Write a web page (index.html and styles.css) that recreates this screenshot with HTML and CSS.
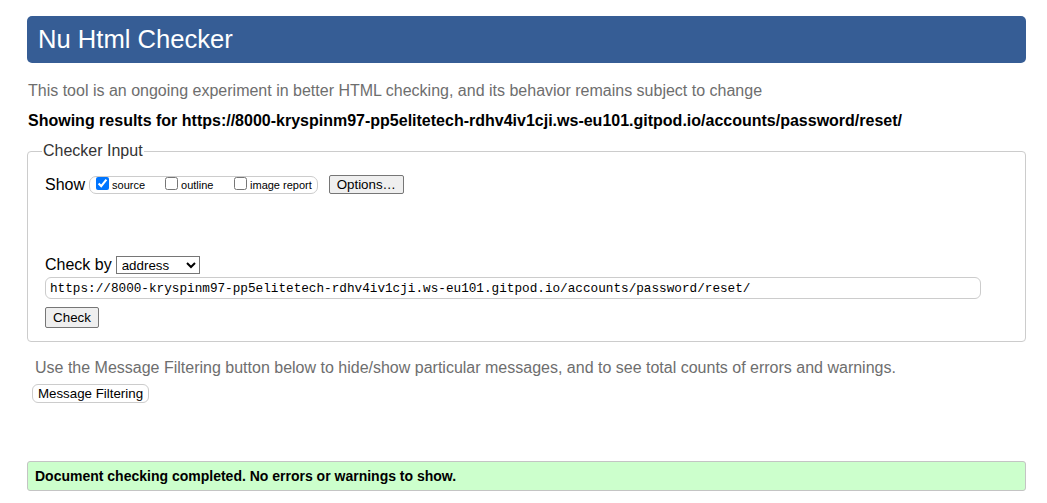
FILE: index.html
```html
<!DOCTYPE html>
<html lang="en">
<head>
<meta charset="utf-8">
<title>Nu Html Checker</title>
<link rel="stylesheet" href="styles.css">
</head>
<body>
<div class="page">
  <h1 class="banner">Nu Html Checker</h1>
  <p class="intro">This tool is an ongoing experiment in better HTML checking, and its behavior remains subject to change</p>
  <p class="results">Showing results for https://8000-kryspinm97-pp5elitetech-rdhv4iv1cji.ws-eu101.gitpod.io/accounts/password/reset/</p>
  <fieldset class="checker">
    <legend class="legend">Checker Input</legend>
    <div class="show-row">
      <span class="show-label">Show</span>
      <span class="show-group">
        <label class="opt opt-source"><input type="checkbox" class="cb" checked>source</label>
        <label class="opt opt-outline"><input type="checkbox" class="cb">outline</label>
        <label class="opt opt-image"><input type="checkbox" class="cb">image report</label>
      </span>
      <button class="btn btn-options" type="button">Options…</button>
    </div>
    <div class="checkby-row">
      <span class="checkby-label">Check by</span>
      <select class="select">
        <option>address</option>
      </select>
    </div>
    <input class="url" type="text" value="https://8000-kryspinm97-pp5elitetech-rdhv4iv1cji.ws-eu101.gitpod.io/accounts/password/reset/">
    <div class="check-row"><button class="btn btn-check" type="button">Check</button></div>
  </fieldset>
  <p class="filter-note">Use the Message Filtering button below to hide/show particular messages, and to see total counts of errors and warnings.</p>
  <div class="filter-row"><button class="btn-filter" type="button">Message Filtering</button></div>
  <div class="success">Document checking completed. No errors or warnings to show.</div>
</div>
</body>
</html>
```
FILE: styles.css
```css
html, body {
  margin: 0;
  padding: 0;
  background: #fff;
}
body {
  font-family: "Liberation Sans", Arial, sans-serif;
  color: #000;
}
.page {
  padding: 16px 21px 0 27px;
}
.banner {
  margin: 0;
  height: 47px;
  line-height: 47px;
  padding: 0 11px;
  background: #365d95;
  color: #fff;
  font-size: 25.6px;
  font-weight: normal;
  border-radius: 5px;
}
.intro {
  margin: 19px 0 0 1px;
  font-size: 16px;
  line-height: 18px;
  color: #6e6e6e;
}
.results {
  margin: 12px 0 0 1px;
  font-size: 16px;
  line-height: 18px;
  font-weight: bold;
}
.checker {
  margin: 12px 0 0 0;
  border: 1px solid #cccccc;
  border-radius: 4px;
  padding: 0 17px 13px 17px;
  min-inline-size: 0;
}
.legend {
  font-size: 16px;
  line-height: 18px;
  color: #333;
  padding: 0 1px;
  margin-left: -3px;
}
.show-row {
  display: flex;
  align-items: center;
  margin-top: 15px;
  height: 19px;
}
.show-label, .checkby-label {
  font-size: 16px;
  line-height: 18px;
}
.show-group {
  display: inline-flex;
  align-items: center;
  margin-left: 4px;
  height: 16px;
  border: 1px solid #cccccc;
  border-radius: 7px;
  padding: 0 5px 0 6px;
}
.opt {
  display: inline-flex;
  align-items: center;
  font-size: 11px;
  height: 16px;
}
.opt-source { width: 69px; }
.opt-outline { width: 69px; }
.cb {
  margin: 0 3px 0 0;
  width: 13px;
  height: 13px;
  accent-color: #0075ff;
  position: relative;
  top: -1px;
}
.btn {
  font-family: "Liberation Sans", Arial, sans-serif;
  font-size: 13.33px;
  background: #efefef;
  border: 1px solid #767676;
  border-radius: 2px;
  color: #000;
  padding: 0;
  height: 19px;
  line-height: 17px;
}
.btn-options {
  margin-left: 11px;
  width: 75px;
}
.checkby-row {
  display: flex;
  align-items: center;
  margin-top: 62px;
  height: 18px;
}
.select {
  margin-left: 4px;
  width: 84px;
  height: 18px;
  font-family: "Liberation Sans", Arial, sans-serif;
  font-size: 13.33px;
  border: 1px solid #767676;
  border-radius: 0;
  background: #fff;
  padding: 0 0 0 1px;
}
.url {
  display: block;
  box-sizing: border-box;
  margin-top: 3px;
  width: 936px;
  height: 22px;
  border: 1px solid #cccccc;
  border-radius: 6px;
  padding: 0 4px;
  font-family: "Liberation Mono", "DejaVu Sans Mono", monospace;
  font-size: 12.7px;
  color: #000;
  outline: none;
}
.check-row {
  margin-top: 8px;
  height: 21px;
}
.btn-check {
  width: 54px;
  height: 21px;
  line-height: 19px;
}
.filter-note {
  margin: 17px 0 0 8px;
  font-size: 16px;
  line-height: 18px;
  color: #6e6e6e;
}
.filter-row {
  margin-top: 7px;
  margin-left: 5px;
  height: 19px;
}
.btn-filter {
  font-family: "Liberation Sans", Arial, sans-serif;
  font-size: 13.33px;
  width: 117px;
  height: 19px;
  line-height: 17px;
  padding: 0;
  background: #fff;
  border: 1px solid #cccccc;
  border-radius: 6px;
  color: #000;
}
.success {
  margin-top: 58px;
  height: 28px;
  line-height: 28px;
  border: 1px solid #c4c4c4;
  border-radius: 3px;
  background: #ccffcc;
  padding: 0 7px;
  font-size: 14px;
  font-weight: bold;
}
```
